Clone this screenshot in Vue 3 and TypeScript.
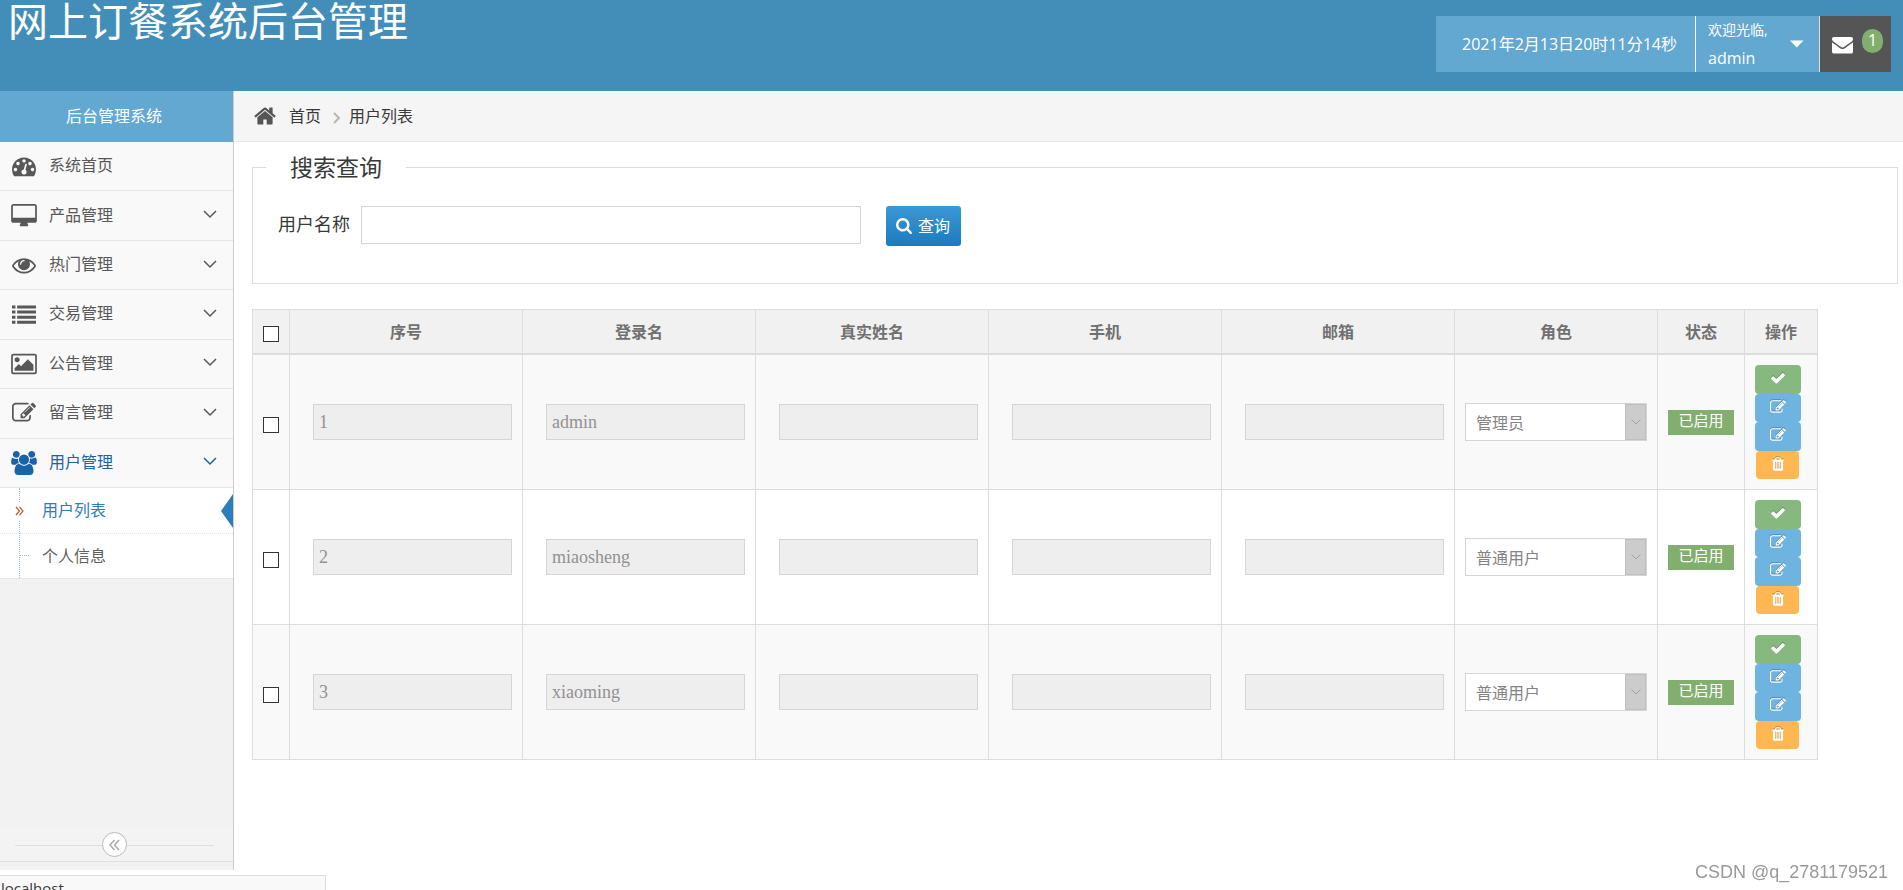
<script setup lang="ts">
import { ref } from 'vue'

interface MenuItem {
  label: string
  icon: string
  expandable: boolean
  active?: boolean
}

interface UserRow {
  id: number
  login: string
  name: string
  phone: string
  email: string
  role: string
  checked: boolean
}

const icons: Record<string, string> = {
  dashboard:
    'M384 1152q0-53-37.5-90.5t-90.5-37.5-90.5 37.5-37.5 90.5 37.5 90.5 90.5 37.5 90.5-37.5 37.5-90.5zm192-448q0-53-37.5-90.5t-90.5-37.5-90.5 37.5-37.5 90.5 37.5 90.5 90.5 37.5 90.5-37.5 37.5-90.5zm428 481l101-382q6-26-7.5-48.5t-38.5-29.5-48 6.5-30 39.5l-101 382q-60 5-107 43.5t-63 98.5q-20 77 20 146t117 89 146-20 89-117q16-60-6-117t-72-91zm660-33q0-53-37.5-90.5t-90.5-37.5-90.5 37.5-37.5 90.5 37.5 90.5 90.5 37.5 90.5-37.5 37.5-90.5zm-640-640q0-53-37.5-90.5t-90.5-37.5-90.5 37.5-37.5 90.5 37.5 90.5 90.5 37.5 90.5-37.5 37.5-90.5zm448 192q0-53-37.5-90.5t-90.5-37.5-90.5 37.5-37.5 90.5 37.5 90.5 90.5 37.5 90.5-37.5 37.5-90.5zm320 448q0 261-141 483-19 29-54 29h-1402q-35 0-54-29-141-221-141-483 0-182 71-348t191-286 286-191 348-71 348 71 286 191 191 286 71 348z',
  desktop:
    'M1728 992v-832q0-13-9.5-22.5t-22.5-9.5h-1600q-13 0-22.5 9.5t-9.5 22.5v832q0 13 9.5 22.5t22.5 9.5h1600q13 0 22.5-9.5t9.5-22.5zm128-832v1088q0 66-47 113t-113 47h-544q0 37 16 77.5t32 71 16 43.5q0 26-19 45t-45 19h-512q-26 0-45-19t-19-45q0-14 16-44t32-70 16-78h-544q-66 0-113-47t-47-113v-1088q0-66 47-113t113-47h1600q66 0 113 47t47 113z',
  eye: 'M1664 960q-152-236-381-353 61 104 61 225 0 185-131.5 316.5t-316.5 131.5-316.5-131.5-131.5-316.5q0-121 61-225-229 117-381 353 133 205 333.5 326.5t434.5 121.5 434.5-121.5 333.5-326.5zm-720-384q0-20-14-34t-34-14q-125 0-214.5 89.5t-89.5 214.5q0 20 14 34t34 14 34-14 14-34q0-86 61-147t147-61q20 0 34-14t14-34zm848 384q0 34-20 69-140 230-376.5 368.5t-499.5 138.5-499.5-139-376.5-368q-20-35-20-69t20-69q140-229 376.5-368t499.5-139 499.5 139 376.5 368q20 35 20 69z',
  list: 'M0 256h256v224h-256zM384 256h1408v224h-1408zM0 640h256v224h-256zM384 640h1408v224h-1408zM0 1024h256v224h-256zM384 1024h1408v224h-1408zM0 1408h256v224h-256zM384 1408h1408v224h-1408z',
  picture:
    'M576 576q0 80-56 136t-136 56-136-56-56-136 56-136 136-56 136 56 56 136zm1024 384v448h-1408v-192l320-320 160 160 512-512zm96-704h-1600q-13 0-22.5 9.5t-9.5 22.5v1216q0 13 9.5 22.5t22.5 9.5h1600q13 0 22.5-9.5t9.5-22.5v-1216q0-13-9.5-22.5t-22.5-9.5zm160 32v1216q0 66-47 113t-113 47h-1600q-66 0-113-47t-47-113v-1216q0-66 47-113t113-47h1600q66 0 113 47t47 113z',
  edit: 'M888 1184l116-116-152-152-116 116v56h96v96h56zm440-720q-16-16-33 1l-350 350q-17 17-1 33t33-1l350-350q17-17 1-33zm80 594v190q0 119-84.5 203.5t-203.5 84.5h-832q-119 0-203.5-84.5t-84.5-203.5v-832q0-119 84.5-203.5t203.5-84.5h832q63 0 117 25 15 7 18 23 3 17-9 29l-49 49q-14 14-32 8-23-6-45-6h-832q-66 0-113 47t-47 113v832q0 66 47 113t113 47h832q66 0 113-47t47-113v-126q0-13 9-22l64-64q15-15 35-7t20 29zm-96-738l288 288-672 672h-288v-288zm444 132l-92 92-288-288 92-92q28-28 68-28t68 28l152 152q28 28 28 68t-28 68z',
  users:
    'M529 896q-162 5-265 128h-134q-82 0-138-40.5t-56-118.5q0-353 124-353 6 0 43.5 21t97.5 42.5 119 21.5q67 0 133-23-5 37-5 66 0 159 81 283zm1071 637q0 120-73 189.5t-194 69.5h-874q-121 0-194-69.5t-73-189.5q0-53 3.5-103.5t14-109 26.5-108.5 43-97.5 62-81 85.5-53.5 111.5-20q10 0 43 21.5t73 48 107 48 135 21.5 135-21.5 107-48 73-48 43-21.5q61 0 111.5 20t85.5 53.5 62 81 43 97.5 26.5 108.5 14 109 3.5 103.5zm-1024-1277q0 106-75 181t-181 75-181-75-75-181 75-181 181-75 181 75 75 181zm704 384q0 159-112.5 271.5t-271.5 112.5-271.5-112.5-112.5-271.5 112.5-271.5 271.5-112.5 271.5 112.5 112.5 271.5zm576 225q0 78-56 118.5t-138 40.5h-134q-103-123-265-128 81-124 81-283 0-29-5-66 66 23 133 23 59 0 119-21.5t97.5-42.5 43.5-21q124 0 124 353zm-128-609q0 106-75 181t-181 75-181-75-75-181 75-181 181-75 181 75 75 181z',
  search:
    'M1216 832q0-185-131.5-316.5t-316.5-131.5-316.5 131.5-131.5 316.5 131.5 316.5 316.5 131.5 316.5-131.5 131.5-316.5zm512 832q0 52-38 90t-90 38q-54 0-90-38l-343-342q-179 124-399 124-143 0-273.5-55.5t-225-150-150-225-55.5-273.5 55.5-273.5 150-225 225-150 273.5-55.5 273.5 55.5 225 150 150 225 55.5 273.5q0 220-124 399l343 343q37 37 37 90z',
  envelope:
    'M1792 710v794q0 66-47 113t-113 47h-1472q-66 0-113-47t-47-113v-794q44 49 101 87 362 246 497 345 57 42 92.5 65.5t94.5 48 110 24.5h2q51 0 110-24.5t94.5-48 92.5-65.5q170-123 498-345 57-39 100-87zm0-294q0 79-49 151t-122 123q-376 261-468 325-10 7-42.5 31t-54 38.5-52 32.5-57.5 27-50 9h-2q-23 0-50-9t-57.5-27-52-32.5-54-38.5-42.5-31q-91-64-262-182.5t-205-142.5q-62-42-117-115.5t-55-136.5q0-78 41.5-130t118.5-52h1472q65 0 112.5 47t47.5 113z',
  home: 'M1408 992v480q0 26-19 45t-45 19h-384v-384h-256v384h-384q-26 0-45-19t-19-45v-480q0-1 .5-3t.5-3l575-474 575 474q1 2 1 6zm223-69l-62 74q-8 9-21 11h-3q-13 0-21-7l-692-577-692 577q-12 8-24 7-13-2-21-11l-62-74q-8-10-7-23.5t11-21.5l719-599q32-26 76-26t76 26l244 204v-195q0-14 9-23t23-9h192q14 0 23 9t9 23v408l219 182q10 8 11 21.5t-7 23.5z',
  check:
    'M1671 566q0 40-28 68l-724 724-136 136q-28 28-68 28t-68-28l-136-136-362-362q-28-28-28-68t28-68l136-136q28-28 68-28t68 28l294 295 656-657q28-28 68-28t68 28l136 136q28 28 28 68z',
  trash:
    'M704 1376v-704q0-14-9-23t-23-9h-64q-14 0-23 9t-9 23v704q0 14 9 23t23 9h64q14 0 23-9t9-23zm256 0v-704q0-14-9-23t-23-9h-64q-14 0-23 9t-9 23v704q0 14 9 23t23 9h64q14 0 23-9t9-23zm256 0v-704q0-14-9-23t-23-9h-64q-14 0-23 9t-9 23v704q0 14 9 23t23 9h64q14 0 23-9t9-23zm-544-992h448l-48-117q-7-9-17-11h-317q-10 2-17 11zm928 32v64q0 14-9 23t-23 9h-96v948q0 83-47 143.5t-113 60.5h-832q-66 0-113-58.5t-47-141.5v-952h-96q-14 0-23-9t-9-23v-64q0-14 9-23t23-9h309l70-167q15-37 54-63t79-26h320q40 0 79 26t54 63l70 167h309q14 0 23 9t9 23z',
}

const menu: MenuItem[] = [
  { label: '系统首页', icon: 'dashboard', expandable: false },
  { label: '产品管理', icon: 'desktop', expandable: true },
  { label: '热门管理', icon: 'eye', expandable: true },
  { label: '交易管理', icon: 'list', expandable: true },
  { label: '公告管理', icon: 'picture', expandable: true },
  { label: '留言管理', icon: 'edit', expandable: true },
  { label: '用户管理', icon: 'users', expandable: true, active: true },
]

const actions = [
  { icon: 'check', kind: 'success', title: '启用' },
  { icon: 'edit', kind: 'info', title: '编辑' },
  { icon: 'edit', kind: 'info', title: '修改' },
  { icon: 'trash', kind: 'warning', title: '删除' },
]

const headings = ['序号', '登录名', '真实姓名', '手机', '邮箱', '角色', '状态', '操作']
const roles = ['管理员', '普通用户']
const keyword = ref('')
const allChecked = ref(false)
const rows = ref<UserRow[]>([
  { id: 1, login: 'admin', name: '', phone: '', email: '', role: '管理员', checked: false },
  { id: 2, login: 'miaosheng', name: '', phone: '', email: '', role: '普通用户', checked: false },
  { id: 3, login: 'xiaoming', name: '', phone: '', email: '', role: '普通用户', checked: false },
])

function fields(row: UserRow) {
  return [
    { label: '序号', value: String(row.id) },
    { label: '登录名', value: row.login },
    { label: '真实姓名', value: row.name },
    { label: '手机', value: row.phone },
    { label: '邮箱', value: row.email },
  ]
}

function toggleAll() {
  rows.value.forEach((row) => (row.checked = allChecked.value))
}
</script>

<template>
  <div class="page">
    <header class="topbar">
      <h1 class="brand">网上订餐系统后台管理</h1>
      <div class="tools">
        <div class="clock">2021年2月13日20时11分14秒</div>
        <button type="button" class="account">
          <span class="who"><small>欢迎光临,</small><span>admin</span></span>
          <svg class="caret" viewBox="0 0 14 8" aria-hidden="true"><path d="M0 0.500h13.500l-6.750 7z" /></svg>
        </button>
        <button type="button" class="mail" aria-label="消息">
          <svg class="mail-icon" viewBox="0 0 1792 1792" aria-hidden="true"><path :d="icons.envelope" /></svg>
          <span class="count">1</span>
        </button>
      </div>
    </header>

    <div class="body">
      <aside class="sidebar">
        <div class="side-title">后台管理系统</div>
        <nav class="menu">
          <a v-for="item in menu" :key="item.label" href="#" class="menu-item" :class="{ active: item.active }">
            <svg class="menu-icon" viewBox="-64 0 1920 1792" aria-hidden="true"><path :d="icons[item.icon]" /></svg>
            <span class="menu-label">{{ item.label }}</span>
            <svg v-if="item.expandable" class="chevron" viewBox="0 0 14 9" aria-hidden="true"><path d="M1 1l6 6 6-6" /></svg>
          </a>
        </nav>
        <div class="submenu">
          <a href="#" class="sub-item current">
            <span class="marker">
              <svg viewBox="0 0 9 10" aria-hidden="true"><path d="M1 1l3.500 4-3.500 4M4.500 1l3.500 4-3.500 4" /></svg>
            </span>
            用户列表
          </a>
          <a href="#" class="sub-item">个人信息</a>
        </div>
        <div class="collapse">
          <button type="button" class="collapse-btn" aria-label="收起菜单">
            <svg viewBox="0 0 11 12" aria-hidden="true"><path d="M5.500 1l-4.500 5 4.500 5M10 1l-4.500 5 4.500 5" /></svg>
          </button>
        </div>
      </aside>

      <main class="main">
        <nav class="crumbs">
          <svg class="home-icon" viewBox="0 0 1664 1792" aria-hidden="true"><path :d="icons.home" /></svg>
          <a href="#" class="crumb">首页</a>
          <svg class="sep" viewBox="0 0 8 12" aria-hidden="true"><path d="M1 1l5 5-5 5" /></svg>
          <span class="crumb">用户列表</span>
        </nav>

        <div class="content">
          <fieldset class="search">
            <legend>搜索查询</legend>
            <form class="search-form" @submit.prevent>
              <label for="keyword">用户名称</label>
              <input id="keyword" v-model="keyword" type="text" />
              <button type="submit">
                <svg viewBox="64 128 1664 1664" aria-hidden="true"><path :d="icons.search" /></svg>
                查询
              </button>
            </form>
          </fieldset>

          <table class="users">
            <colgroup>
              <col class="c-check" />
              <col span="5" />
              <col class="c-role" />
              <col class="c-status" />
              <col class="c-action" />
            </colgroup>
            <thead>
              <tr>
                <th class="pick"><input v-model="allChecked" type="checkbox" aria-label="全选" @change="toggleAll" /></th>
                <th v-for="h in headings" :key="h">{{ h }}</th>
              </tr>
            </thead>
            <tbody>
              <tr v-for="row in rows" :key="row.id">
                <td class="pick"><input v-model="row.checked" type="checkbox" :aria-label="'选择 ' + row.login" /></td>
                <td v-for="f in fields(row)" :key="f.label" class="field">
                  <input type="text" :value="f.value" :aria-label="f.label" disabled />
                </td>
                <td class="role">
                  <div class="select-box">
                    <select v-model="row.role" aria-label="角色" disabled>
                      <option v-for="r in roles" :key="r">{{ r }}</option>
                    </select>
                    <span class="select-arrow">
                      <svg viewBox="0 0 10 6" aria-hidden="true"><path d="M0.500 0.500l4.500 4.500 4.500-4.500" /></svg>
                    </span>
                  </div>
                </td>
                <td class="status"><span class="badge">已启用</span></td>
                <td class="ops">
                  <button v-for="a in actions" :key="a.title" type="button" :class="a.kind" :aria-label="a.title">
                    <svg viewBox="0 0 1792 1792" aria-hidden="true"><path :d="icons[a.icon]" /></svg>
                  </button>
                </td>
              </tr>
            </tbody>
          </table>
        </div>
      </main>
    </div>

    <div class="link-status">localhost</div>
    <div class="watermark">CSDN @q_2781179521</div>
  </div>
</template>

<style>
body {
  margin: 0;
  background: #fff;
}
</style>

<style scoped>
.page,
.page *,
.page *::before,
.page *::after {
  box-sizing: border-box;
}
.page {
  display: flex;
  flex-direction: column;
  min-height: 100vh;
  font-family: 'Open Sans', 'Noto Sans CJK SC', sans-serif;
  font-size: 16px;
  line-height: 24px;
  color: #393939;
}
button,
input,
select {
  font: inherit;
  margin: 0;
}
a {
  color: inherit;
  text-decoration: none;
}
svg {
  display: block;
  flex: none;
  fill: currentColor;
}

.topbar {
  display: flex;
  justify-content: space-between;
  align-items: flex-start;
  min-height: 91px;
  padding: 0 12px 0 8px;
  background: #438eb9;
  color: #fff;
}
.brand {
  margin: 0;
  font-size: 40px;
  font-weight: 400;
  line-height: 42px;
}
.tools {
  display: flex;
  height: 56px;
  margin-top: 16px;
}
.clock {
  display: flex;
  align-items: center;
  justify-content: center;
  width: 260px;
  padding-left: 8px;
  background: #62a8d1;
  border-right: 1px solid #fff;
}
.account {
  display: flex;
  align-items: center;
  justify-content: space-between;
  width: 124px;
  padding: 0 15px 0 12px;
  border: 0;
  border-right: 1px solid #ddd;
  background: #62a8d1;
  color: #fff;
  text-align: left;
}
.who {
  display: flex;
  flex-direction: column;
  line-height: 28px;
}
.who small {
  font-size: 14px;
}
.caret {
  width: 14px;
  height: 8px;
}
.mail {
  display: flex;
  align-items: center;
  gap: 9px;
  width: 71px;
  padding: 0 8px 0 12px;
  border: 0;
  background: #555;
  color: #fff;
}
.mail-icon {
  width: 21px;
  height: 21px;
}
.count {
  width: 22px;
  height: 24px;
  margin-bottom: 6px;
  border-radius: 12px;
  background: #82af6f;
  line-height: 22px;
  text-align: center;
}

.body {
  display: flex;
  flex: 1;
}
.sidebar {
  display: flex;
  flex-direction: column;
  flex: none;
  width: 234px;
  margin-bottom: 20px;
  padding-bottom: 8px;
  border-right: 1px solid #ccc;
  background: #f2f2f2;
}
.side-title {
  height: 51px;
  padding-right: 5px;
  background: #62a8d1;
  color: #fff;
  line-height: 50px;
  text-align: center;
}
.menu {
  display: grid;
  grid-template-rows: repeat(7, 1fr);
  height: 346px;
}
.menu-item {
  display: flex;
  align-items: center;
  padding: 0 16px 0 11px;
  border-bottom: 1px solid #e5e5e5;
  background: #f9f9f9;
  color: #585858;
}
.menu-item.active {
  color: #1963aa;
}
.menu-icon {
  width: 26px;
  height: 24px;
  overflow: visible;
}
.menu-label {
  flex: 1;
  margin-left: 12px;
  padding-bottom: 2px;
}
.chevron {
  width: 14px;
  height: 9px;
  margin-bottom: 2px;
  fill: none;
  stroke: currentColor;
  stroke-width: 1.5;
}
.submenu {
  position: relative;
  border-bottom: 1px solid #e5e5e5;
  background: #fff;
}
.submenu::before {
  content: '';
  position: absolute;
  top: 0;
  bottom: 0;
  left: 19px;
  border-left: 1px dotted #9dbdd6;
}
.sub-item {
  display: block;
  position: relative;
  padding-left: 42px;
  color: #616161;
  line-height: 45px;
}
.sub-item + .sub-item {
  border-top: 1px dotted #e4e4e4;
  line-height: 44px;
}
.sub-item + .sub-item::before {
  content: '';
  position: absolute;
  top: 21px;
  left: 20px;
  width: 9px;
  border-top: 1px dotted #9dbdd6;
}
.current {
  color: #2b7dbc;
}
.current::after {
  content: '';
  position: absolute;
  top: 6px;
  right: 0;
  border: 17px solid transparent;
  border-left-width: 0;
  border-right: 12px solid #2b7dbc;
}
.marker {
  position: absolute;
  top: 14px;
  left: 15px;
  padding: 4px 0;
  background: #fff;
}
.marker svg {
  width: 9px;
  height: 10px;
  fill: none;
  stroke: #c86139;
  stroke-width: 1.3;
}
.collapse {
  display: flex;
  justify-content: center;
  position: relative;
  margin-top: auto;
  padding: 4px 5px 4px 0;
  border-bottom: 1px solid #e0e0e0;
  background: #f3f3f3;
}
.collapse::before {
  content: '';
  position: absolute;
  top: 17px;
  left: 15px;
  right: 19px;
  border-top: 1px solid #e0e0e0;
}
.collapse-btn {
  display: flex;
  align-items: center;
  justify-content: center;
  position: relative;
  width: 25px;
  height: 25px;
  padding: 0;
  border: 1px solid #bbb;
  border-radius: 50%;
  background: #fff;
  color: #aaa;
}
.collapse-btn svg {
  width: 11px;
  height: 12px;
  fill: none;
  stroke: currentColor;
  stroke-width: 1.5;
}

.main {
  flex: 1;
  min-width: 0;
}
.crumbs {
  display: flex;
  align-items: center;
  height: 51px;
  padding-left: 20px;
  border-bottom: 1px solid #e5e5e5;
  background: #f5f5f5;
}
.home-icon {
  width: 22px;
  height: 24px;
  margin-right: 13px;
  color: #555;
}
.sep {
  width: 8px;
  height: 12px;
  margin: 4px 8px 0 12px;
  fill: none;
  stroke: #b2b6bf;
  stroke-width: 2;
}

.content {
  padding: 9px 5px 20px 18px;
}
.search {
  min-width: 0;
  margin: 0 0 25px;
  padding: 23px 20px 37px 25px;
  border: 1px solid #ddd;
}
.search legend {
  margin-left: -12px;
  padding: 0 24px;
  font-size: 23px;
  line-height: 32px;
}
.search-form {
  display: flex;
  align-items: flex-start;
}
.search-form label {
  width: 83px;
  font-size: 18px;
  line-height: 36px;
}
.search-form input {
  width: 500px;
  height: 38px;
  padding: 0 6px;
  border: 1px solid #d5d5d5;
  background: #fff;
}
.search-form button {
  display: flex;
  align-items: center;
  gap: 6px;
  height: 40px;
  margin-left: 25px;
  padding: 0 11px 0 10px;
  border: 0;
  border-radius: 3px;
  background: linear-gradient(#3b98d6, #1b7bbf);
  color: #fff;
}
.search-form button svg {
  width: 16px;
  height: 16px;
}

.users {
  width: calc(100% - 80px);
  table-layout: fixed;
  border-collapse: separate;
  border-spacing: 0;
  border: 1px solid #ddd;
  border-width: 1px 0 0 1px;
}
.c-check {
  width: 37px;
}
.c-role {
  width: 203px;
}
.c-status {
  width: 87px;
}
.c-action {
  width: 73px;
}
.users th {
  height: 45px;
  padding: 0;
  border-right: 1px solid #ddd;
  border-bottom: 2px solid #ddd;
  background: #f1f1f1;
  color: #707070;
  font-weight: 700;
  text-align: center;
}
.users td {
  padding: 10px;
  border-right: 1px solid #ddd;
  border-bottom: 1px solid #ddd;
}
.users tbody tr:nth-child(odd) {
  background: #f9f9f9;
}
.users .pick {
  padding: 5px 0 0;
}
.pick input {
  display: block;
  appearance: none;
  width: 16px;
  height: 16px;
  margin: 0 auto;
  border: 1px solid #333;
  background: #fff;
}
.pick input:checked {
  background: #2b7dbc;
}
.users .field {
  padding-left: 23px;
}
.field input {
  display: block;
  width: 100%;
  height: 36px;
  padding: 1px 5px 0;
  border: 1px solid #d5d5d5;
  border-radius: 0;
  background: #eee;
  color: #939192;
  font-family: 'Liberation Serif', serif;
  font-size: 18px;
}
.select-box {
  display: flex;
  height: 38px;
  border: 1px solid #d5d5d5;
  background: #fff;
}
.select-box select {
  flex: 1;
  min-width: 0;
  padding: 2px 10px 0;
  border: 0;
  appearance: none;
  background: #fff;
  color: #848484;
  opacity: 1;
}
.select-arrow {
  display: flex;
  align-items: center;
  justify-content: center;
  width: 21px;
  border: 1px solid #bfbfbf;
  background: #ccc;
}
.select-arrow svg {
  width: 10px;
  height: 6px;
  fill: none;
  stroke: #a2a2a2;
}
.badge {
  display: block;
  height: 25px;
  background: #82af6f;
  color: #fff;
  font-size: 15px;
  line-height: 20px;
  text-align: center;
}
.ops button {
  display: flex;
  justify-content: center;
  width: 46px;
  height: 28px;
  padding: 5px 0 0;
  border: 0;
  border-radius: 4px;
  color: #fff;
}
.ops button:nth-child(odd) {
  height: 29px;
}
.ops svg {
  width: 16px;
  height: 16px;
  filter: drop-shadow(0 -1px 0 rgba(0, 0, 0, 0.25));
}
.ops .success {
  background: #87b87f;
}
.ops .info {
  background: #6fb3e0;
}
.ops .warning {
  width: 43px;
  margin-left: 1px;
  background: #ffb752;
}

.link-status {
  position: fixed;
  bottom: 0;
  left: 0;
  width: 326px;
  height: 15px;
  padding: 0 1px;
  overflow: hidden;
  border: 1px solid #ddd;
  border-width: 1px 1px 0 0;
  background: #f9f9f9;
  font-size: 15px;
}
.watermark {
  position: fixed;
  right: 15px;
  bottom: 6px;
  color: #999;
  font-family: 'Liberation Sans', sans-serif;
  font-size: 18px;
}
</style>
